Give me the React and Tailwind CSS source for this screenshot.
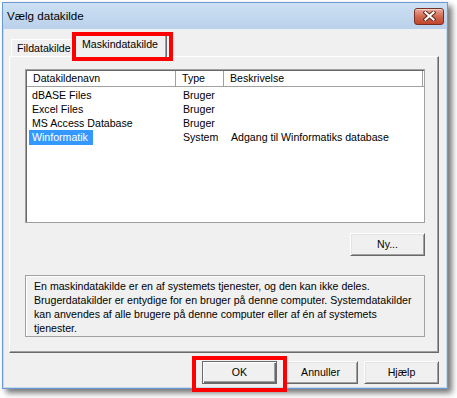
import React from 'react';

const columns = [
  { key: 'name', label: 'Datakildenavn', width: 'w-[149px]' },
  { key: 'type', label: 'Type', width: 'w-[48px]' },
  { key: 'desc', label: 'Beskrivelse', width: 'w-[199px]' },
];

const sources = [
  { name: 'dBASE Files', type: 'Bruger', desc: '' },
  { name: 'Excel Files', type: 'Bruger', desc: '' },
  { name: 'MS Access Database', type: 'Bruger', desc: '' },
  { name: 'Winformatik', type: 'System', desc: 'Adgang til Winformatiks database', selected: true },
];

const helpLines = [
  'En maskindatakilde er en af systemets tjenester, og den kan ikke deles.',
  'Brugerdatakilder er entydige for en bruger på denne computer. Systemdatakilder',
  'kan anvendes af alle brugere på denne computer eller af én af systemets',
  'tjenester.',
];

function ClassicButton({ children, isDefault, className = '' }) {
  return (
    <button
      type="button"
      className={
        'h-[23px] w-[75px] bg-[#f0f0f0] text-black flex items-center justify-center leading-none ' +
        (isDefault
          ? 'border border-[#696969] shadow-[inset_1px_1px_0_#ffffff,inset_-1px_-1px_0_#696969,inset_-2px_-2px_0_#a0a0a0] '
          : 'border border-t-white border-l-white border-r-[#696969] border-b-[#696969] shadow-[inset_1px_1px_0_#e3e3e3,inset_-1px_-1px_0_#a0a0a0] ') +
        className
      }
    >
      {children}
    </button>
  );
}

export default function App() {
  return (
    <div className="relative w-[457px] h-[398px] bg-white overflow-hidden font-['Liberation_Sans',Arial,sans-serif] text-[10.6px] text-black">
      {/* window */}
      <div className="ml-[2px] mt-[2px] w-[446px] h-[387px] border border-[#6b9bd3] bg-[#c4d8ee] flex flex-col shadow-[4px_4px_6px_rgba(0,0,0,0.55)]">
        {/* title bar */}
        <div className="h-[26px] shrink-0 flex items-center justify-between pl-[4px] pr-[3px] bg-gradient-to-b from-[#cde0f3] to-[#b9d1ea]">
          <span className="text-[11.6px] leading-none text-black">Vælg datakilde</span>
          <div className="w-[30px] h-[17px] rounded-[3px] border border-[#7a2f22] bg-gradient-to-b from-[#e9a99a] via-[#d06a50] to-[#c0452a] flex items-center justify-center shadow-[inset_0_1px_0_rgba(255,255,255,0.5)]">
            <svg width="13" height="10" viewBox="0 0 13 10">
              <path d="M2.5 1.5 L10.5 8.5 M10.5 1.5 L2.5 8.5" stroke="#5a2418" strokeWidth="4" strokeLinecap="square" />
              <path d="M2.5 1.5 L10.5 8.5 M10.5 1.5 L2.5 8.5" stroke="#ffffff" strokeWidth="2.2" strokeLinecap="square" />
            </svg>
          </div>
        </div>

        {/* client area */}
        <div className="mx-[1px] h-[358px] shrink-0 bg-[#f0f0f0] flex flex-col">
          {/* tabs */}
          <div className="relative z-10 mt-[6px] h-[22px] flex items-end pl-[7px]">
            <div className="w-[64px] h-[17px] mb-[1px] border-t border-l border-white pl-[5px] pt-[2px] leading-[12px] whitespace-nowrap">
              Fildatakilde
            </div>
            <div className="w-[92px] h-[22px] bg-[#f0f0f0] border-t border-l border-white border-r border-r-[#696969] shadow-[inset_-1px_0_0_#a0a0a0] pl-[6px] pt-[2px] leading-[12px] whitespace-nowrap">
              Maskindatakilde
            </div>
          </div>

          {/* tab panel */}
          <div className="-mt-[1px] ml-[5px] w-[430px] h-[297px] shrink-0 border-t border-l border-white border-r border-b border-r-[#696969] border-b-[#696969] shadow-[inset_-1px_-1px_0_#a0a0a0] flex flex-col pt-[12px] pl-[15px] pr-[13px]">
            {/* list view */}
            <div className="h-[154px] shrink-0 bg-white border border-[#a0a0a0] shadow-[inset_1px_1px_0_#696969] flex flex-col pl-[1px] pt-[1px]">
              <div className="h-[16px] shrink-0 flex bg-white">
                {columns.map((c) => (
                  <div
                    key={c.key}
                    className={c.width + ' h-full border-b border-r border-[#a0a0a0] shadow-[inset_1px_1px_0_#ffffff] pl-[6px] leading-[15px] whitespace-nowrap'}
                  >
                    {c.label}
                  </div>
                ))}
                <div className="flex-1 h-full border-b border-[#a0a0a0]" />
              </div>
              <div className="flex flex-col pt-[1px]">
                {sources.map((s) => (
                  <div key={s.name} className="h-[14px] flex leading-[14px] whitespace-nowrap">
                    <div className="w-[149px] pl-[2px]">
                      <span className={s.selected ? 'inline-block bg-[#3399ff] text-white pl-[3px] pr-[5px] h-[15px] leading-[15px]' : 'inline-block pl-[3px]'}>
                        {s.name}
                      </span>
                    </div>
                    <div className="w-[48px] pl-[7px]">{s.type}</div>
                    <div className="w-[199px] pl-[7px]">{s.desc}</div>
                  </div>
                ))}
              </div>
            </div>

            <ClassicButton className="mt-[10px] self-end w-[74px]">Ny...</ClassicButton>

            {/* description */}
            <div className="mt-[19px] h-[62px] shrink-0 border border-[#a0a0a0] shadow-[inset_1px_1px_0_#ffffff] pl-[8px] pt-[3px]">
              {helpLines.map((l) => (
                <div key={l} className="leading-[14px] whitespace-nowrap">{l}</div>
              ))}
            </div>
          </div>

          {/* dialog buttons */}
          <div className="mt-[8px] flex justify-end gap-[6px] pr-[7px]">
            <ClassicButton isDefault>OK</ClassicButton>
            <ClassicButton>Annuller</ClassicButton>
            <ClassicButton>Hjælp</ClassicButton>
          </div>
        </div>
      </div>

      {/* red annotation boxes */}
      <div className="absolute left-[72px] top-[32px] w-[101px] h-[29px] border-[4px] border-[#ff0000] z-20" />
      <div className="absolute left-[192px] top-[356px] w-[95px] h-[36px] border-[4px] border-[#ff0000] z-20" />
    </div>
  );
}
